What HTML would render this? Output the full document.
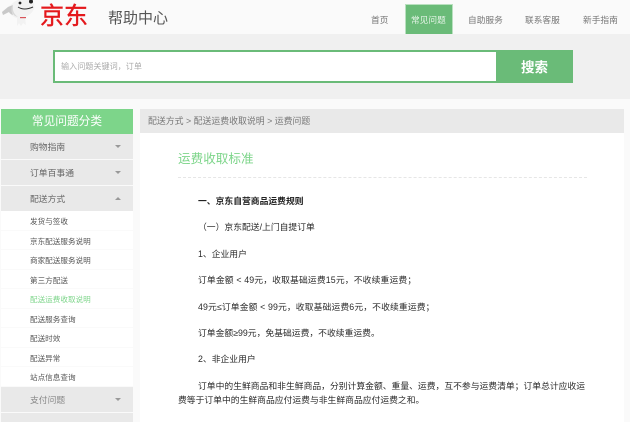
<!DOCTYPE html>
<html lang="zh-CN"><head><meta charset="utf-8"><title>帮助中心</title>
<style>
*{margin:0;padding:0;box-sizing:border-box}
html,body{width:630px;height:422px;overflow:hidden;background:#fafafa}
body{position:relative;font-family:"Liberation Sans","Noto Sans CJK SC",sans-serif;color:#333}
#w{position:absolute;left:0;top:0;width:630px;height:422px;filter:blur(.3px)}
.a{position:absolute;white-space:nowrap}
.nav{top:14px;font-size:8.7px;line-height:12px;color:#777}
.cat{position:absolute;left:1px;width:132px;height:25px;background:#e9e9e9}
.cat span{position:absolute;left:29px;top:1px;line-height:25px;font-size:8.8px;color:#666}
.cat i{position:absolute;left:114px;top:11px;width:0;height:0;border-left:3px solid transparent;border-right:3px solid transparent;border-top:3px solid #999}
.cat i.up{border-top:0;border-bottom:3px solid #999}
.sub{position:absolute;left:1px;width:132px;height:19.5px;background:#fff;border-bottom:1px solid #fafafa}
.sub span{position:absolute;left:29px;top:1px;line-height:19px;font-size:7.6px;color:#555}
.p{left:198px;font-size:8.8px;line-height:13px;color:#2a2a2a}
</style></head><body><div id="w">
<div class="a" style="left:0;top:0;width:630px;height:34px;background:#fafafa"></div>
<svg class="a" style="left:0;top:0" width="38" height="30" viewBox="0 0 38 30">
<path d="M2 12L8 7L13 3Q18 -2 28 -1Q36 2 34 9Q31 15 25 17L26 25L23 23L21 26L19 23L17 26L17 18Q12 17 9 12L3 15Z" fill="#f2f2f2"/>
<path d="M2 12L8 7L13 5Q10 9 13 15Q10 14 9 12L3 15Z" fill="#c9c9c9"/>
<path d="M13 6Q12 13 18 17L15 16Q10 12 12 6Z" fill="#d9d9d9"/>
<circle cx="20" cy="3" r="1.4" fill="#222"/><circle cx="31" cy="1.5" r="2" fill="#222"/>
<path d="M18 7Q24 11 33 7" fill="none" stroke="#333" stroke-width="1"/>
<rect x="20" y="17" width="6" height="1.2" fill="#d8545a"/>
</svg>
<div class="a" style="left:40px;top:2px;font-size:24px;line-height:30px;color:#e4181c;font-weight:400;-webkit-text-stroke:.4px #e4181c">京东</div>
<div class="a" style="left:108px;top:9px;font-size:15px;line-height:20px;color:#555">帮助中心</div>
<div class="a nav" style="left:371px">首页</div>
<div class="a" style="left:405px;top:4px;width:48px;height:30px;background:#6abb78;border:1px solid #b9e0bf;border-bottom:0"></div>
<div class="a nav" style="left:411px;color:#e4f3e6">常见问题</div>
<div class="a nav" style="left:468px">自助服务</div>
<div class="a nav" style="left:525px">联系客服</div>
<div class="a nav" style="left:583px">新手指南</div>

<div class="a" style="left:0;top:34px;width:630px;height:65px;background:#f0f0f0"></div>
<div class="a" style="left:53px;top:50px;width:520px;height:33px;background:#fff;border:2px solid #6abb78"></div>
<div class="a" style="left:61px;top:60px;font-size:8.1px;line-height:13px;color:#aaa">输入问题关键词，订单</div>
<div class="a" style="left:496px;top:51px;width:77px;height:33px;color:#fff;font-size:13.5px;font-weight:700;line-height:33px;text-align:center;z-index:2">搜索</div>
<div class="a" style="left:496px;top:50px;width:77px;height:33px;background:#6abb78"></div>

<div class="a" style="left:1px;top:109px;width:132px;height:25px;background:#7dd58a;color:#fff;font-size:11.7px;line-height:26px;text-align:center">常见问题分类</div>
<div class="cat" style="top:134px"><span>购物指南</span><i></i></div>
<div class="cat" style="top:160px"><span>订单百事通</span><i></i></div>
<div class="cat" style="top:186px"><span>配送方式</span><i class="up"></i></div>
<div class="sub" style="top:211px"><span>发货与签收</span></div>
<div class="sub" style="top:230.5px"><span>京东配送服务说明</span></div>
<div class="sub" style="top:250px"><span>商家配送服务说明</span></div>
<div class="sub" style="top:269.5px"><span>第三方配送</span></div>
<div class="sub" style="top:289px"><span style="color:#7dd58a">配送运费收取说明</span></div>
<div class="sub" style="top:308.5px"><span>配送服务查询</span></div>
<div class="sub" style="top:328px"><span>配送时效</span></div>
<div class="sub" style="top:347.5px"><span>配送异常</span></div>
<div class="sub" style="top:367px"><span>站点信息查询</span></div>
<div class="cat" style="top:387px"><span style="color:#888">支付问题</span><i></i></div>
<div class="cat" style="top:413px"></div>

<div class="a" style="left:140px;top:109px;width:484px;height:313px;background:#fff"></div>
<div class="a" style="left:140px;top:109px;width:484px;height:24px;background:#e9e9e9"></div>
<div class="a" style="left:148px;top:115px;font-size:8.9px;line-height:12px;color:#777">配送方式 &gt; 配送运费收取说明 &gt; 运费问题</div>
<div class="a" style="left:178px;top:150px;font-size:12.6px;line-height:18px;color:#7dd58a">运费收取标准</div>
<div class="a" style="left:178px;top:177px;width:409px;border-top:1px dashed #e6e6e6"></div>

<div class="a p" style="top:195px;font-weight:700;color:#222">一、京东自营商品运费规则</div>
<div class="a p" style="top:221px">（一）京东配送/上门自提订单</div>
<div class="a p" style="top:248px">1、企业用户</div>
<div class="a p" style="top:274px;letter-spacing:.14px">订单金额 &lt; 49元，收取基础运费15元，不收续重运费；</div>
<div class="a p" style="top:301px;letter-spacing:.12px">49元≤订单金额 &lt; 99元，收取基础运费6元，不收续重运费；</div>
<div class="a p" style="top:327px">订单金额≥99元，免基础运费，不收续重运费。</div>
<div class="a p" style="top:353px">2、非企业用户</div>
<div class="a p" style="top:380px">订单中的生鲜商品和非生鲜商品，分别计算金额、重量、运费，互不参与运费清单；订单总计应收运</div>
<div class="a p" style="left:178px;top:394px">费等于订单中的生鲜商品应付运费与非生鲜商品应付运费之和。</div>
</div></body></html>
